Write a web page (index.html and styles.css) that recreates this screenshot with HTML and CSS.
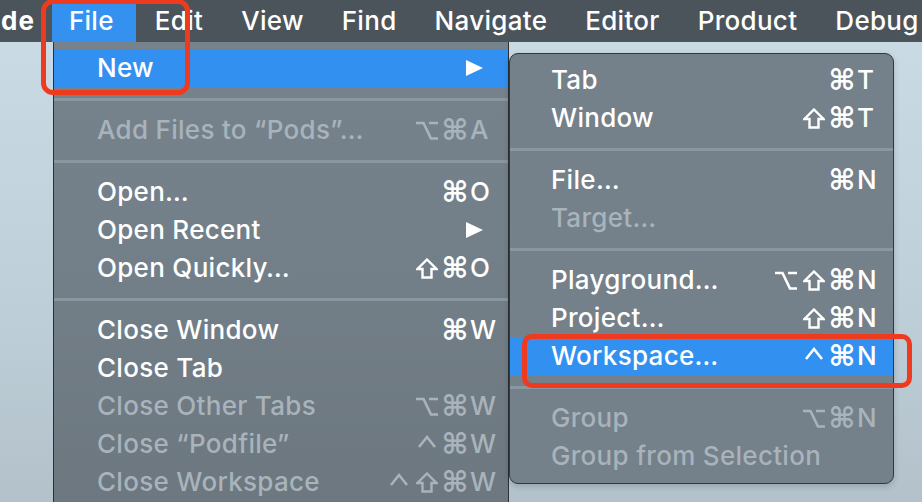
FILE: index.html
```html
<!DOCTYPE html>
<html lang="en">
<head>
<meta charset="utf-8">
<title>Xcode File menu</title>
<link rel="stylesheet" href="styles.css">
</head>
<body>
<div class="screen">
  <nav class="menubar">
    <span class="mb-item app">de</span>
    <span class="mb-item active">File</span>
    <span class="mb-item">Edit</span>
    <span class="mb-item">View</span>
    <span class="mb-item">Find</span>
    <span class="mb-item">Navigate</span>
    <span class="mb-item">Editor</span>
    <span class="mb-item">Product</span>
    <span class="mb-item">Debug</span>
  </nav>

  <div class="desktop">
    <div class="menu main-menu">
      <div class="row hl"><span class="label">New</span><span class="mods"></span><span class="key"><svg class="arrow" width="17" height="16" viewBox="0 0 17 16"><path d="M0 0 L17 8 L0 16 Z" fill="#fff"/></svg></span></div>
      <div class="sep"></div>
      <div class="row dis"><span class="label">Add Files to “Pods”…</span><span class="mods"><i class="svgmod"><svg class="opt" viewBox="0 0 24 21"><path d="M1 3 L8.5 3 L16 18.5 L23 18.5 M14 3 L23 3"/></svg></i><i>⌘</i></span><span class="key">A</span></div>
      <div class="sep"></div>
      <div class="row"><span class="label">Open…</span><span class="mods"><i>⌘</i></span><span class="key">O</span></div>
      <div class="row"><span class="label">Open Recent</span><span class="mods"></span><span class="key"><svg class="arrow" width="17" height="16" viewBox="0 0 17 16"><path d="M0 0 L17 8 L0 16 Z" fill="#fff"/></svg></span></div>
      <div class="row"><span class="label">Open Quickly…</span><span class="mods"><i class="svgmod"><svg class="shift" viewBox="0 0 22 21"><path d="M11 1.5 L20.5 11 L15.5 11 L15.5 19.5 L6.5 19.5 L6.5 11 L1.5 11 Z"/></svg></i><i>⌘</i></span><span class="key">O</span></div>
      <div class="sep"></div>
      <div class="row"><span class="label">Close Window</span><span class="mods"><i>⌘</i></span><span class="key">W</span></div>
      <div class="row"><span class="label">Close Tab</span><span class="mods"></span><span class="key"></span></div>
      <div class="row dis"><span class="label">Close Other Tabs</span><span class="mods"><i class="svgmod"><svg class="opt" viewBox="0 0 24 21"><path d="M1 3 L8.5 3 L16 18.5 L23 18.5 M14 3 L23 3"/></svg></i><i>⌘</i></span><span class="key">W</span></div>
      <div class="row dis"><span class="label">Close “Podfile”</span><span class="mods"><i class="svgmod"><svg class="caret" viewBox="0 0 18 21"><path d="M1 13 L9 3 L17 13"/></svg></i><i>⌘</i></span><span class="key">W</span></div>
      <div class="row dis"><span class="label">Close Workspace</span><span class="mods"><i class="svgmod"><svg class="caret" viewBox="0 0 18 21"><path d="M1 13 L9 3 L17 13"/></svg></i><i class="svgmod"><svg class="shift" viewBox="0 0 22 21"><path d="M11 1.5 L20.5 11 L15.5 11 L15.5 19.5 L6.5 19.5 L6.5 11 L1.5 11 Z"/></svg></i><i>⌘</i></span><span class="key">W</span></div>
    </div>

    <div class="menu sub-menu">
      <div class="row"><span class="label">Tab</span><span class="mods"><i>⌘</i></span><span class="key">T</span></div>
      <div class="row"><span class="label">Window</span><span class="mods"><i class="svgmod"><svg class="shift" viewBox="0 0 22 21"><path d="M11 1.5 L20.5 11 L15.5 11 L15.5 19.5 L6.5 19.5 L6.5 11 L1.5 11 Z"/></svg></i><i>⌘</i></span><span class="key">T</span></div>
      <div class="sep"></div>
      <div class="row"><span class="label">File…</span><span class="mods"><i>⌘</i></span><span class="key">N</span></div>
      <div class="row dis"><span class="label">Target…</span><span class="mods"></span><span class="key"></span></div>
      <div class="sep"></div>
      <div class="row"><span class="label">Playground…</span><span class="mods"><i class="svgmod"><svg class="opt" viewBox="0 0 24 21"><path d="M1 3 L8.5 3 L16 18.5 L23 18.5 M14 3 L23 3"/></svg></i><i class="svgmod"><svg class="shift" viewBox="0 0 22 21"><path d="M11 1.5 L20.5 11 L15.5 11 L15.5 19.5 L6.5 19.5 L6.5 11 L1.5 11 Z"/></svg></i><i>⌘</i></span><span class="key">N</span></div>
      <div class="row"><span class="label">Project…</span><span class="mods"><i class="svgmod"><svg class="shift" viewBox="0 0 22 21"><path d="M11 1.5 L20.5 11 L15.5 11 L15.5 19.5 L6.5 19.5 L6.5 11 L1.5 11 Z"/></svg></i><i>⌘</i></span><span class="key">N</span></div>
      <div class="row hl"><span class="label">Workspace…</span><span class="mods"><i class="svgmod"><svg class="caret" viewBox="0 0 18 21"><path d="M1 13 L9 3 L17 13"/></svg></i><i>⌘</i></span><span class="key">N</span></div>
      <div class="sep"></div>
      <div class="row dis"><span class="label">Group</span><span class="mods"><i class="svgmod"><svg class="opt" viewBox="0 0 24 21"><path d="M1 3 L8.5 3 L16 18.5 L23 18.5 M14 3 L23 3"/></svg></i><i>⌘</i></span><span class="key">N</span></div>
      <div class="row dis"><span class="label">Group from Selection</span><span class="mods"></span><span class="key"></span></div>
    </div>
  </div>

  <div class="mark mark-file"></div>
  <div class="mark mark-workspace"></div>
</div>
</body>
</html>
```

FILE: styles.css
```css
html, body {
  margin: 0;
  padding: 0;
}
body {
  width: 922px;
  height: 502px;
  overflow: hidden;
  font-family: "Inter", "DejaVu Sans", sans-serif;
  color: #fff;
}
.screen {
  position: relative;
  width: 922px;
  height: 502px;
  display: flex;
  flex-direction: column;
  background: linear-gradient(180deg, #ccdce6 0%, #bfcfd9 60%, #b2c1ca 100%);
}
.menubar {
  height: 42px;
  flex: 0 0 42px;
  display: flex;
  align-items: stretch;
  background: #4b545b;
  font-size: 26px;
  font-weight: 500;
  white-space: nowrap;
  overflow: hidden;
}
.mb-item {
  display: flex;
  align-items: center;
  padding: 0 19px;
  line-height: 42px;
  letter-spacing: 0.3px;
}
.mb-item.app {
  font-weight: 700;
  padding: 0 17px 0 1px;
  letter-spacing: 1px;
}
.mb-item.active {
  background: #3591ef;
  padding: 0 22px 0 17px;
}
.desktop {
  position: relative;
  flex: 1;
}
.menu {
  position: absolute;
  box-sizing: border-box;
  font-size: 26px;
  font-weight: 500;
  letter-spacing: 0.3px;
}
.main-menu {
  left: 53px;
  top: 0;
  width: 456px;
  height: 470px;
  padding-top: 7px;
  background: linear-gradient(180deg, #77838c 0%, #737f88 50%, #6c777f 100%);
  border-left: 1px solid #2b3035;
  border-right: 1px solid #2b3035;
}
.sub-menu {
  left: 509px;
  top: 11px;
  width: 385px;
  padding: 7px 0 8px;
  background: #74808a;
  border: 1px solid #33383c;
  border-radius: 9px;
  box-shadow: 0 2px 6px rgba(0,0,0,0.18);
}
.row {
  display: grid;
  grid-template-columns: 1fr auto 38px;
  align-items: center;
  height: 38px;
  line-height: 38px;
  white-space: nowrap;
}
.main-menu .row { padding-left: 43px; }
.sub-menu .row { padding-left: 41px; grid-template-columns: 1fr auto 36px; }
.row.hl { background: #3291f0; }
.row.dis { color: #a8b3bb; }
.mods {
  display: flex;
  justify-content: flex-end;
  align-items: center;
  padding-right: 1px;
}
.mods i {
  font-style: normal;
  font-family: "DejaVu Sans", sans-serif;
  font-weight: 700;
  width: 28px;
  text-align: center;
  font-size: 29px;
  height: 38px;
  line-height: 38px;
}
.mods i.svgmod {
  display: flex;
  align-items: center;
  justify-content: center;
}
.mods svg {
  fill: none;
  stroke: currentColor;
  stroke-linejoin: miter;
}
.shift {
  width: 22px;
  height: 21px;
  stroke-width: 2.4;
}
.caret {
  width: 18px;
  height: 21px;
  stroke-width: 2.6;
}
.opt {
  width: 24px;
  height: 21px;
  stroke-width: 2.6;
}
.key {
  display: flex;
  align-items: center;
}
.arrow {
  margin-left: -4px;
}
.sep {
  height: 24px;
  display: flex;
  align-items: center;
}
.sep::before {
  content: "";
  flex: 1;
  height: 3px;
  background: #8b979f;
}
.mark {
  position: absolute;
  border: 5px solid #ee3a1e;
  box-sizing: border-box;
}
.mark-file {
  left: 41px;
  top: -1px;
  width: 149px;
  height: 96px;
  border-radius: 12px;
}
.mark-workspace {
  left: 522px;
  top: 334px;
  width: 390px;
  height: 54px;
  border-radius: 10px;
}
```
